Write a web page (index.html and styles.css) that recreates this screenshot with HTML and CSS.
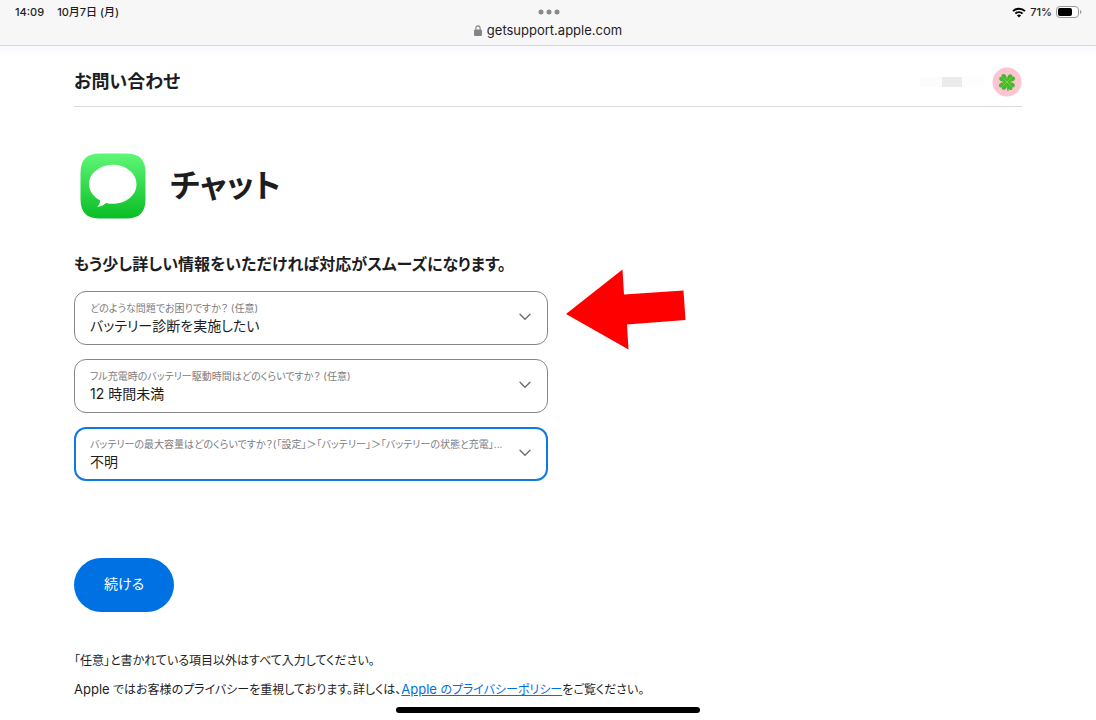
FILE: index.html
```html
<!DOCTYPE html>
<html lang="ja">
<head>
<meta charset="utf-8">
<meta name="viewport" content="width=device-width, initial-scale=1">
<title>お問い合わせ</title>
<link rel="stylesheet" href="styles.css">
</head>
<body>
<header class="browser">
  <div class="status">
    <div class="status-left"><span>14:09</span><span>10月7日 (月)</span></div>
    <svg class="dots" width="22" height="6" viewBox="0 0 22 6" aria-hidden="true"><circle cx="3" cy="3" r="2.5"/><circle cx="11" cy="3" r="2.5"/><circle cx="19" cy="3" r="2.5"/></svg>
    <div class="status-right">
      <svg width="14" height="11" viewBox="0 0 14 11" fill="none" stroke="#000" stroke-width="2" aria-hidden="true"><path d="M1 4.1a8.6 8.6 0 0 1 12 0M3.4 6.6a5.2 5.2 0 0 1 7.2 0"/><path d="M7 10.6 4.9 8.5a3 3 0 0 1 4.2 0Z" fill="#000" stroke="none"/></svg>
      <span>71%</span>
      <svg width="26" height="12" viewBox="0 0 26 12" aria-hidden="true"><rect x=".5" y=".5" width="22" height="11" rx="3.5" fill="#fff" stroke="#999"/><rect x="2" y="2" width="14" height="8" rx="2"/><path d="M24 4v4q1.5-.6 1.5-2T24 4" fill="#999"/></svg>
    </div>
  </div>
  <div class="address">
    <svg width="8" height="11" viewBox="0 0 8 11" aria-hidden="true"><rect y="4.5" width="8" height="6.5" rx="1.2" fill="#858587"/><path d="M1.9 5V3a2.1 2.1 0 0 1 4.2 0v2" fill="none" stroke="#858587" stroke-width="1.1"/></svg>
    <span>getsupport.apple.com</span>
  </div>
</header>
<main class="page">
  <div class="topbar">
    <h2 class="section">お問い合わせ</h2>
    <div class="account">
      <span class="masked"></span>
      <svg width="30" height="30" viewBox="0 0 30 30" role="img" aria-label="アカウント">
        <circle cx="15" cy="15" r="14.5" fill="#fdc5d1"/>
        <path d="M15 15q-.4 5 1.200 9" fill="none" stroke="#6cb544" stroke-width="1.500"/>
        <g fill="#45b82b">
          <path id="leaf" d="M15 15C10.800 15.200 7.200 14.200 7.200 11.800 7.200 10.300 8.300 9.600 9.600 9.800 9.200 8 10.200 6.800 11.800 6.900 14.300 7.100 15.200 11 15 15Z"/>
          <use href="#leaf" transform="rotate(90 15 15)"/><use href="#leaf" transform="rotate(180 15 15)"/><use href="#leaf" transform="rotate(270 15 15)"/>
        </g>
        <path d="m10.500 10.500 9 9m0-9-9 9" stroke="#7ed84a" stroke-width=".9"/>
      </svg>
    </div>
  </div>
  <div class="hero">
    <svg width="66" height="66" viewBox="0 0 66 66" aria-hidden="true">
      <defs><linearGradient id="green" x1="0" y1="0" x2="0" y2="1"><stop offset="0" stop-color="#5ff777"/><stop offset="1" stop-color="#09bd25"/></linearGradient></defs>
      <path d="M20 .5H46C59.500 .5 65.500 6.500 65.500 20V46C65.500 59.500 59.500 65.500 46 65.500H20C6.500 65.500 .5 59.500 .5 46V20C.5 6.500 6.500 .5 20 .5Z" fill="url(#green)"/>
      <path d="M33 11.800C46 11.800 56.500 20.300 56.500 31.300S46 50.800 33 50.800C30.500 50.800 28.200 50.500 26 49.900 23.500 52.200 20.500 53.600 17.200 53.800 19 52 20 50 20.200 47.500 13.500 44 9 38 9 31.300 9 20.300 20 11.800 33 11.800Z" fill="#fff"/>
    </svg>
    <h1 class="title">チャット</h1>
  </div>
  <h3 class="lead">もう少し詳しい情報をいただければ対応がスムーズになります。</h3>
  <form class="form">
    <div class="field">
      <label class="field-label" for="issue">どのような問題でお困りですか？ (任意)</label>
      <select class="field-select" id="issue"><option>バッテリー診断を実施したい</option></select>
      <svg class="chevron" viewBox="0 0 12 8" aria-hidden="true"><path d="m1 1.300 5 5 5-5"/></svg>
    </div>
    <div class="field">
      <label class="field-label" for="hours">フル充電時のバッテリー駆動時間はどのくらいですか？ (任意)</label>
      <select class="field-select" id="hours"><option>12 時間未満</option></select>
      <svg class="chevron" viewBox="0 0 12 8" aria-hidden="true"><path d="m1 1.300 5 5 5-5"/></svg>
    </div>
    <div class="field">
      <label class="field-label" for="capacity">バッテリーの最大容量はどのくらいですか？(「設定」＞「バッテリー」＞「バッテリーの状態と充電」...</label>
      <select class="field-select active" id="capacity"><option>不明</option></select>
      <svg class="chevron" viewBox="0 0 12 8" aria-hidden="true"><path d="m1 1.300 5 5 5-5"/></svg>
    </div>
    <svg class="arrow" width="120" height="82" viewBox="0 0 120 82" aria-hidden="true"><path d="M0 45 56.500 .5 58 25.500 117.500 21.500 119.500 51 61 55.500 62.500 80.500Z" fill="#f00"/></svg>
    <button class="submit" type="button">続ける</button>
  </form>
  <footer class="notes">
    <p>「任意」と書かれている項目以外はすべて入力してください。</p>
    <p><span class="latin">Apple</span> ではお客様のプライバシーを重視しております。詳しくは、<a href="#privacy"><span class="latin">Apple</span> のプライバシーポリシー</a>をご覧ください。</p>
  </footer>
</main>
<div class="home-indicator"></div>
</body>
</html>
```
FILE: styles.css
```css
* { box-sizing: border-box; }
body {
  margin: 0;
  background: #fff;
  color: #1d1d1f;
  font-family: Inter, "Noto Sans CJK JP", sans-serif;
  font-feature-settings: "palt";
}
h1, h2, h3, p { margin: 0; }
svg { display: block; flex: none; }

.browser {
  height: 46px;
  background: #f7f7f8;
  border-bottom: 1px solid #d6d6d8;
}
.status {
  display: grid;
  grid-template-columns: 1fr auto 1fr;
  align-items: center;
  height: 22px;
  padding: 2px 14px 0 15px;
  font-size: 11px;
  font-weight: 500;
  line-height: 20px;
}
.status-left { display: flex; gap: 13px; font-size: 11px; }
.status-right { display: flex; align-items: center; justify-content: flex-end; gap: 4px; }
.dots { fill: #8a8a8c; }
.address {
  display: flex;
  align-items: center;
  justify-content: center;
  gap: 5px;
  font-size: 13px;
  line-height: 16px;
}

.page {
  padding: 0 74px 24px;
  background: linear-gradient(#f9f9ff 0, #fff 12px);
}
.topbar {
  display: flex;
  align-items: center;
  justify-content: space-between;
  height: 61px;
  padding-top: 12px;
  border-bottom: 1px solid #d9d9db;
}
.section { font-size: 18px; line-height: 28px; font-weight: 700; }
.account { display: flex; align-items: center; gap: 8px; }
.masked {
  width: 64px;
  height: 10px;
  background: linear-gradient(90deg, #fcfcfc 22px, #ebebec 22px 42px, #fefdfd 42px);
}

.hero {
  display: flex;
  align-items: center;
  gap: 24px;
  padding: 46px 0 32px 6px;
}
.title { font-size: 32px; line-height: 48px; font-weight: 700; }
.lead { font-size: 16px; line-height: 26px; font-weight: 700; }

.form { position: relative; padding-top: 14px; }
.field { position: relative; width: 50%; margin-bottom: 14px; }
.field-label {
  position: absolute;
  top: 8px;
  left: 16px;
  color: #7c7c81;
  font-size: 10px;
  line-height: 18px;
  white-space: nowrap;
  pointer-events: none;
}
.field-select {
  display: block;
  width: 100%;
  height: 54px;
  padding: 15px 36px 0 15px;
  border: 1px solid #86868b;
  border-radius: 12px;
  background: #fff;
  color: #1d1d1f;
  font: inherit;
  font-size: 14px;
  font-feature-settings: "palt";
  appearance: none;
  outline: none;
}
.field-select.active { padding-left: 14px; border: 2px solid #0f7ae5; }
.chevron {
  position: absolute;
  top: 22px;
  right: 17px;
  width: 12px;
  height: 8px;
  fill: none;
  stroke: #6e6e73;
  stroke-width: 1.4;
  stroke-linecap: round;
  pointer-events: none;
}
.arrow { position: absolute; top: -8px; left: calc(50% + 18px); }
.submit {
  display: block;
  margin-top: 77px;
  padding: 13px 30px 15px;
  border: 0;
  border-radius: 27px;
  background: #0071e3;
  color: #fff;
  font: inherit;
  font-size: 14px;
  line-height: 26px;
  font-feature-settings: "palt";
}

.notes { padding-top: 34px; font-size: 12px; line-height: 29px; }
.notes a { color: #0071e3; }
.latin { font-size: 13px; }

.home-indicator {
  position: fixed;
  bottom: 7px;
  left: 50%;
  width: 304px;
  height: 6px;
  margin-left: -152px;
  border-radius: 3px;
  background: #000;
}
```
